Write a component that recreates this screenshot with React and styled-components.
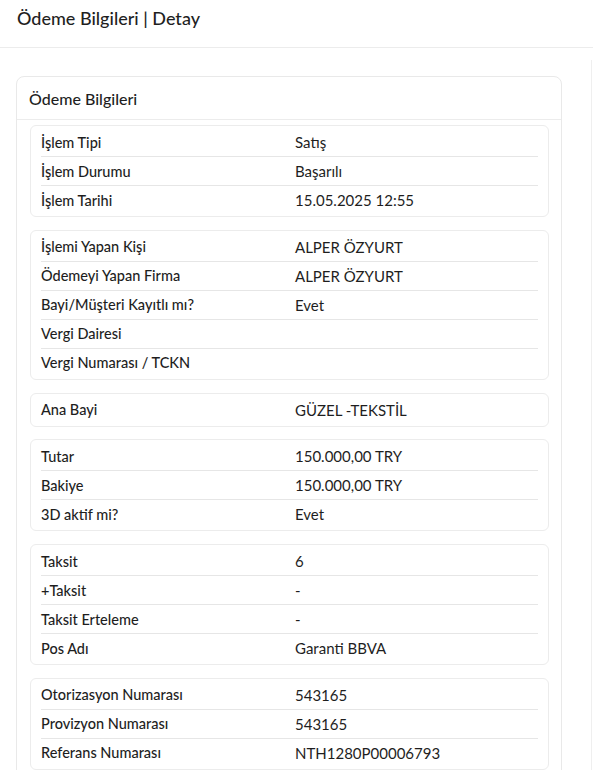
import React from "react";
import styled, { createGlobalStyle } from "styled-components";

const GlobalStyle = createGlobalStyle`
  body {
    margin: 0;
    background: #fff;
    font-family: Lato, "Noto Sans", sans-serif;
    color: #222;
  }
`;

const PageHeader = styled.header`
  height: 48px;
  box-sizing: border-box;
  border-bottom: 1px solid #ececec;
  padding: 6px 17px 0;
`;

const PageTitle = styled.h1`
  margin: 0;
  font-size: 18px;
  font-weight: 500;
  line-height: 24px;
  color: #1f1f1f;
`;

const Main = styled.main`
  padding: 12px 0 0 16px;
`;

const Wrapper = styled.div`
  padding: 16px 30px 0 0;
  border-right: 1px solid #efefef;
  margin-right: 1px;
`;

const Card = styled.section`
  width: 546px;
  box-sizing: border-box;
  border: 1px solid #e9e9e9;
  border-radius: 8px;
  background: #fff;
`;

const CardHeader = styled.div`
  height: 43px;
  box-sizing: border-box;
  display: flex;
  align-items: center;
  padding: 0 12px;
  border-bottom: 1px solid #ececec;
  font-size: 16px;
  font-weight: 500;
  color: #1f1f1f;
`;

const CardBody = styled.div`
  padding: 5px 12px 12px 13px;
  display: flex;
  flex-direction: column;
  gap: 12.75px;
`;

const Group = styled.div`
  border: 1px solid #ececec;
  border-radius: 6px;
  padding: 2px 10px;
`;

const Row = styled.div`
  display: grid;
  grid-template-columns: 254px 1fr;
  align-items: center;
  height: 28px;
  font-size: 14.5px;
  color: #1e1e1e;

  &:not(:last-child) {
    height: 29px;
    box-sizing: border-box;
    border-bottom: 1px solid #e6e6e6;
  }
`;

const Label = styled.span`
  font-weight: 500;
`;

const Value = styled.span`
  font-size: 15px;
`;

const groups = [
  [
    ["İşlem Tipi", "Satış"],
    ["İşlem Durumu", "Başarılı"],
    ["İşlem Tarihi", "15.05.2025 12:55"],
  ],
  [
    ["İşlemi Yapan Kişi", "ALPER ÖZYURT"],
    ["Ödemeyi Yapan Firma", "ALPER ÖZYURT"],
    ["Bayi/Müşteri Kayıtlı mı?", "Evet"],
    ["Vergi Dairesi", ""],
    ["Vergi Numarası / TCKN", ""],
  ],
  [["Ana Bayi", "GÜZEL -TEKSTİL"]],
  [
    ["Tutar", "150.000,00 TRY"],
    ["Bakiye", "150.000,00 TRY"],
    ["3D aktif mi?", "Evet"],
  ],
  [
    ["Taksit", "6"],
    ["+Taksit", "-"],
    ["Taksit Erteleme", "-"],
    ["Pos Adı", "Garanti BBVA"],
  ],
  [
    ["Otorizasyon Numarası", "543165"],
    ["Provizyon Numarası", "543165"],
    ["Referans Numarası", "NTH1280P00006793"],
  ],
];

const App = () => {
  return (
    <>
      <GlobalStyle />
      <PageHeader>
        <PageTitle>Ödeme Bilgileri | Detay</PageTitle>
      </PageHeader>
      <Main>
        <Wrapper>
          <Card>
            <CardHeader>Ödeme Bilgileri</CardHeader>
            <CardBody>
              {groups.map((rows, i) => (
                <Group key={i}>
                  {rows.map(([label, value]) => (
                    <Row key={label}>
                      <Label>{label}</Label>
                      <Value>{value}</Value>
                    </Row>
                  ))}
                </Group>
              ))}
            </CardBody>
          </Card>
        </Wrapper>
      </Main>
    </>
  );
};

export default App;
